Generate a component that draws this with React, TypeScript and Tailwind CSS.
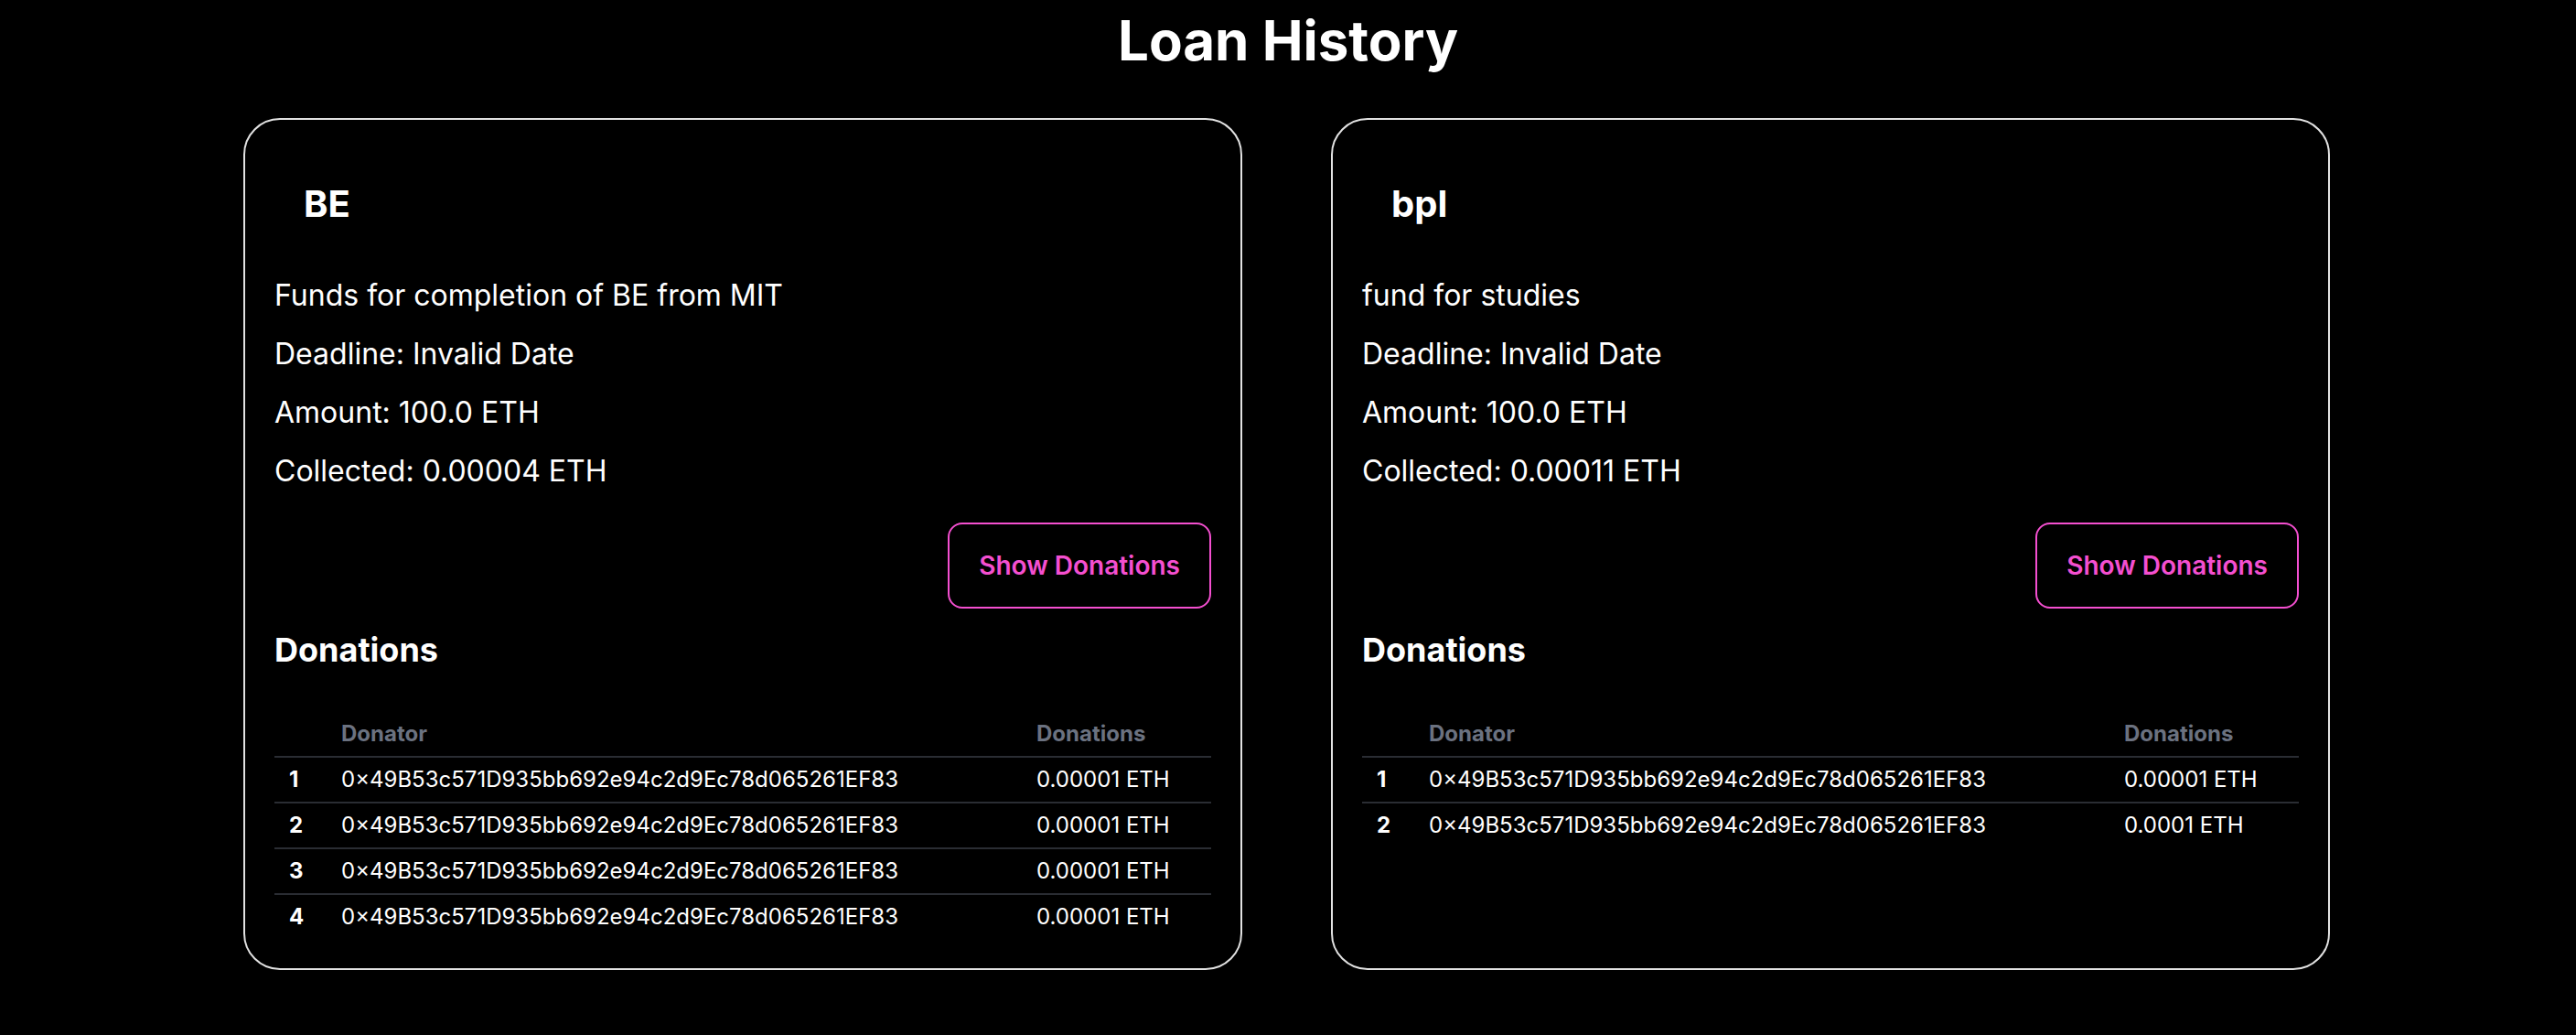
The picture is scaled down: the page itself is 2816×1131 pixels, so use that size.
import React, { FC } from "react";

interface Donation {
  donator: string;
  amount: string;
}

interface Loan {
  title: string;
  description: string;
  deadline: string;
  amount: string;
  collected: string;
  donations: Donation[];
}

// Inter shows the "x" after the leading zero as ×
const ADDRESS = "0×49B53c571D935bb692e94c2d9Ec78d065261EF83";

const loans: Loan[] = [
  {
    title: "BE",
    description: "Funds for completion of BE from MIT",
    deadline: "Invalid Date",
    amount: "100.0 ETH",
    collected: "0.00004 ETH",
    donations: [
      { donator: ADDRESS, amount: "0.00001 ETH" },
      { donator: ADDRESS, amount: "0.00001 ETH" },
      { donator: ADDRESS, amount: "0.00001 ETH" },
      { donator: ADDRESS, amount: "0.00001 ETH" },
    ],
  },
  {
    title: "bpl",
    description: "fund for studies",
    deadline: "Invalid Date",
    amount: "100.0 ETH",
    collected: "0.00011 ETH",
    donations: [
      { donator: ADDRESS, amount: "0.00001 ETH" },
      { donator: ADDRESS, amount: "0.0001 ETH" },
    ],
  },
];

const LoanCard: FC<{ loan: Loan }> = ({ loan }) => {
  return (
    <div className="w-[1092px] rounded-[40px] border-2 border-[#e2e2e2] p-[32px]">
      <div className="p-[32px] text-[40px] leading-[56px] font-bold text-white">
        {loan.title}
      </div>
      <div className="text-[32px] leading-[48px] text-white">
        <p className="mt-[16px]">{loan.description}</p>
        <p className="mt-[16px]">Deadline: {loan.deadline}</p>
        <p className="mt-[16px]">Amount: {loan.amount}</p>
        <p className="mt-[16px]">Collected: {loan.collected}</p>
      </div>
      <div className="mt-[32px] flex justify-end">
        <button className="h-[94px] px-[32px] rounded-[16px] border-2 border-[#f44fd0] text-[28px] leading-[40px] font-semibold text-[#f44fd0]">
          Show Donations
        </button>
      </div>
      <h2 className="mt-[17px] text-[36px] leading-[56px] font-bold text-white">
        Donations
      </h2>
      <div className="mt-[40px] text-[24px] leading-[32px]">
        <div className="grid grid-cols-[57px_760px_1fr] border-b-2 border-[#2a2d33] font-bold text-[#6b7280]">
          <div className="py-[8px] px-[16px]" />
          <div className="py-[8px] px-[16px]">Donator</div>
          <div className="py-[8px] px-[16px]">Donations</div>
        </div>
        {loan.donations.map((d, i) => (
          <div
            key={i}
            className={
              i < loan.donations.length - 1
                ? "grid grid-cols-[57px_760px_1fr] border-b-2 border-[#2a2d33] text-white"
                : "grid grid-cols-[57px_760px_1fr] text-white"
            }
          >
            <div className="py-[8px] px-[16px] font-bold">{i + 1}</div>
            <div className="py-[8px] px-[16px]">{d.donator}</div>
            <div className="py-[8px] px-[16px]">{d.amount}</div>
          </div>
        ))}
      </div>
    </div>
  );
};

const App: FC = () => {
  return (
    <div className="min-h-screen bg-black font-['Inter',sans-serif]">
      <h1 className="pt-[8px] text-center text-[60px] leading-[72px] font-bold text-white">
        Loan History
      </h1>
      <div className="mt-[49px] ml-[266px] flex gap-[97px]">
        {loans.map((loan) => (
          <LoanCard key={loan.title} loan={loan} />
        ))}
      </div>
    </div>
  );
};

export default App;
